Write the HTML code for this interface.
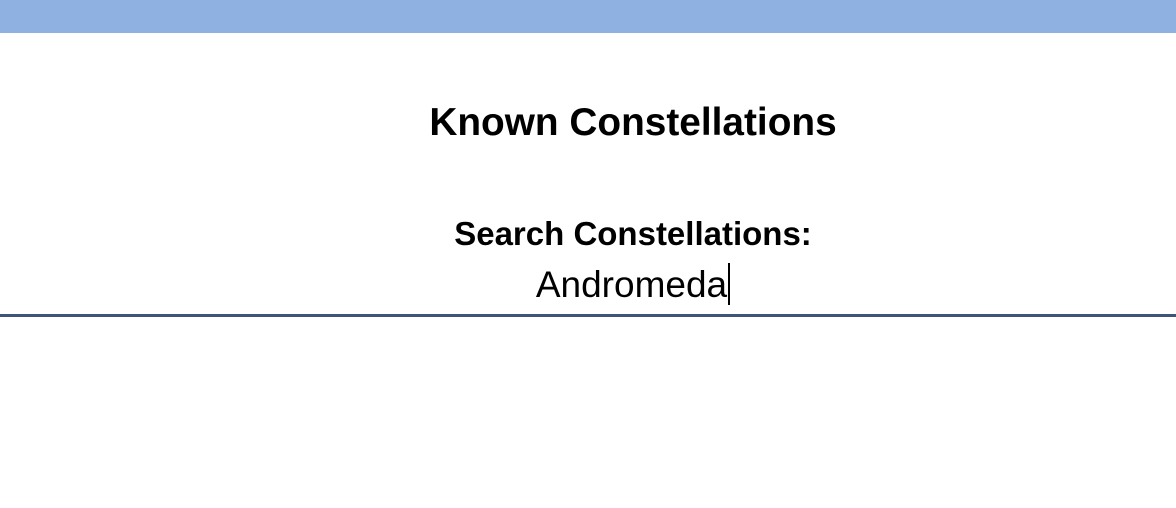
<!DOCTYPE html>
<html><head><style>
html,body{margin:0;padding:0;width:1176px;height:508px;background:#fff;overflow:hidden;font-family:"Liberation Sans",sans-serif;}
.bar{position:absolute;left:0;top:0;width:1176px;height:33px;background:#8fb1e1;}
.c{position:absolute;left:90px;width:1086px;text-align:center;white-space:nowrap;color:#000;}
.t{top:101px;font-size:38.8px;font-weight:bold;}
.s{top:215px;font-size:33px;font-weight:bold;}
.a{top:263px;font-size:37px;}
.cur{display:inline-block;width:2px;height:42px;background:#000;vertical-align:-8px;margin-left:1px;}
.line{position:absolute;left:0;top:314px;width:1176px;height:3px;background:#3d5674;}
</style></head><body>
<div class="bar"></div>
<div class="c t">Known Constellations</div>
<div class="c s">Search Constellations:</div>
<div class="c a">Andromeda<span class="cur"></span></div>
<div class="line"></div>
</body></html>
